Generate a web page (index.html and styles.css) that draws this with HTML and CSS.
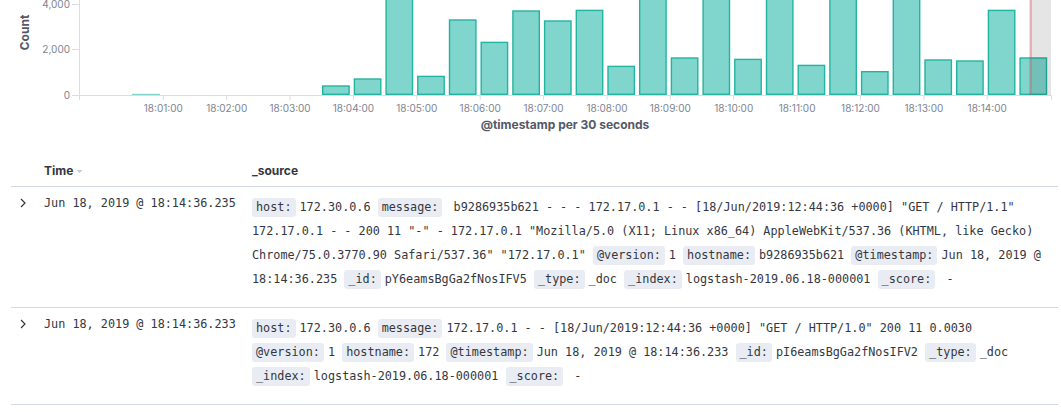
FILE: index.html
```html
<!DOCTYPE html>
<html>
<head>
<meta charset="utf-8">
<link rel="stylesheet" href="styles.css">
</head>
<body>
<div class="chart">
  <svg class="histogram" width="1061" height="154" viewBox="0 0 1061 154">
    <g class="bars">
      <rect class="bar-flat" x="132" y="93.8" width="28" height="1.2"/>
      <rect class="bar" x="322.7" y="86" width="26.4" height="8.3"/>
      <rect class="bar" x="354.4" y="79" width="26.4" height="15.3"/>
      <rect class="bar" x="386.1" y="-5" width="26.4" height="99.3"/>
      <rect class="bar" x="417.8" y="76.4" width="26.4" height="17.9"/>
      <rect class="bar" x="449.5" y="20" width="26.4" height="74.3"/>
      <rect class="bar" x="481.2" y="42.4" width="26.4" height="51.9"/>
      <rect class="bar" x="512.9" y="11" width="26.4" height="83.3"/>
      <rect class="bar" x="544.6" y="21" width="26.4" height="73.3"/>
      <rect class="bar" x="576.3" y="10.4" width="26.4" height="83.9"/>
      <rect class="bar" x="608" y="66.4" width="26.4" height="27.9"/>
      <rect class="bar" x="639.7" y="-5" width="26.4" height="99.3"/>
      <rect class="bar" x="671.4" y="58" width="26.4" height="36.3"/>
      <rect class="bar" x="703.1" y="-5" width="26.4" height="99.3"/>
      <rect class="bar" x="734.8" y="59.4" width="26.4" height="34.9"/>
      <rect class="bar" x="766.5" y="-5" width="26.4" height="99.3"/>
      <rect class="bar" x="798.2" y="65.4" width="26.4" height="28.9"/>
      <rect class="bar" x="829.9" y="-5" width="26.4" height="99.3"/>
      <rect class="bar" x="861.6" y="71.7" width="26.4" height="22.6"/>
      <rect class="bar" x="893.3" y="-5" width="26.4" height="99.3"/>
      <rect class="bar" x="925" y="60" width="26.4" height="34.3"/>
      <rect class="bar" x="956.7" y="61" width="26.4" height="33.3"/>
      <rect class="bar" x="988.4" y="10.4" width="26.4" height="83.9"/>
      <rect class="bar" x="1020.1" y="58" width="26.4" height="36.3"/>
    </g>
    <rect class="partial" x="1029" y="0" width="22" height="95"/>
    <rect class="now-line" x="1030" y="0" width="2" height="95"/>
    <g class="axis">
      <line x1="79.5" y1="0" x2="79.5" y2="100"/>
      <line x1="72" y1="4.5" x2="79" y2="4.5"/>
      <line x1="72" y1="49.5" x2="79" y2="49.5"/>
      <line x1="72" y1="95.5" x2="79" y2="95.5"/>
      <line x1="79" y1="95.5" x2="1052" y2="95.5"/>
      <line x1="1051.5" y1="95" x2="1051.5" y2="100"/>
      <line x1="163.3" y1="95" x2="163.3" y2="100"/>
      <line x1="226.7" y1="95" x2="226.7" y2="100"/>
      <line x1="290.1" y1="95" x2="290.1" y2="100"/>
      <line x1="353.4" y1="95" x2="353.4" y2="100"/>
      <line x1="416.8" y1="95" x2="416.8" y2="100"/>
      <line x1="480.2" y1="95" x2="480.2" y2="100"/>
      <line x1="543.6" y1="95" x2="543.6" y2="100"/>
      <line x1="607" y1="95" x2="607" y2="100"/>
      <line x1="670.3" y1="95" x2="670.3" y2="100"/>
      <line x1="733.7" y1="95" x2="733.7" y2="100"/>
      <line x1="797.1" y1="95" x2="797.1" y2="100"/>
      <line x1="860.5" y1="95" x2="860.5" y2="100"/>
      <line x1="923.9" y1="95" x2="923.9" y2="100"/>
      <line x1="987.2" y1="95" x2="987.2" y2="100"/>
    </g>
    <g class="y-labels">
      <text x="70" y="7.5">4,000</text>
      <text x="70" y="53">2,000</text>
      <text x="70" y="98.8">0</text>
    </g>
    <g class="x-labels">
      <text x="163.3" y="112">18:01:00</text>
      <text x="226.7" y="112">18:02:00</text>
      <text x="290.1" y="112">18:03:00</text>
      <text x="353.4" y="112">18:04:00</text>
      <text x="416.8" y="112">18:05:00</text>
      <text x="480.2" y="112">18:06:00</text>
      <text x="543.6" y="112">18:07:00</text>
      <text x="607" y="112">18:08:00</text>
      <text x="670.3" y="112">18:09:00</text>
      <text x="733.7" y="112">18:10:00</text>
      <text x="797.1" y="112">18:11:00</text>
      <text x="860.5" y="112">18:12:00</text>
      <text x="923.9" y="112">18:13:00</text>
      <text x="987.2" y="112">18:14:00</text>
    </g>
    <text class="axis-title" transform="translate(29 32.5) rotate(-90)">Count</text>
    <text class="axis-title" x="565" y="129">@timestamp per 30 seconds</text>
  </svg>
</div>

<div class="doc-table">
  <div class="doc-row doc-head">
    <div class="cell-toggle"></div>
    <div class="cell-time">Time <svg class="sort-icon" width="7" height="5" viewBox="0 0 7 5"><path d="M0.5 1 L6.5 1 L3.5 4 Z"/></svg></div>
    <div class="cell-source">_source</div>
  </div>

  <div class="doc-row entry">
    <div class="cell-toggle"><svg class="chevron" width="16" height="16" viewBox="0 0 16 16"><path d="M7 4 L11 8 L7 12"/></svg></div>
    <div class="cell-time">Jun 18, 2019 @ 18:14:36.235</div>
    <div class="cell-source"><dl class="fields"><dt>host:</dt><dd>172.30.0.6</dd> <dt>message:</dt><dd> b9286935b621 - - - 172.17.0.1 - - [18/Jun/2019:12:44:36 +0000] "GET / HTTP/1.1" 172.17.0.1 - - 200 11 "-" - 172.17.0.1 "Mozilla/5.0 (X11; Linux x86_64) AppleWebKit/537.36 (KHTML, like Gecko) Chrome/75.0.3770.90 Safari/537.36" "172.17.0.1"</dd> <dt>@version:</dt><dd>1</dd> <dt>hostname:</dt><dd>b9286935b621</dd> <dt>@timestamp:</dt><dd>Jun 18, 2019 @ 18:14:36.235</dd> <dt>_id:</dt><dd>pY6eamsBgGa2fNosIFV5</dd> <dt>_type:</dt><dd>_doc</dd> <dt>_index:</dt><dd>logstash-2019.06.18-000001</dd> <dt>_score:</dt><dd> -</dd></dl></div>
  </div>

  <div class="doc-row entry">
    <div class="cell-toggle"><svg class="chevron" width="16" height="16" viewBox="0 0 16 16"><path d="M7 4 L11 8 L7 12"/></svg></div>
    <div class="cell-time">Jun 18, 2019 @ 18:14:36.233</div>
    <div class="cell-source"><dl class="fields"><dt>host:</dt><dd>172.30.0.6</dd> <dt>message:</dt><dd>172.17.0.1 - - [18/Jun/2019:12:44:36 +0000] "GET / HTTP/1.0" 200 11 0.0030</dd> <dt>@version:</dt><dd>1</dd> <dt>hostname:</dt><dd>172</dd> <dt>@timestamp:</dt><dd>Jun 18, 2019 @ 18:14:36.233</dd> <dt>_id:</dt><dd>pI6eamsBgGa2fNosIFV2</dd> <dt>_type:</dt><dd>_doc</dd> <dt>_index:</dt><dd>logstash-2019.06.18-000001</dd> <dt>_score:</dt><dd> -</dd></dl></div>
  </div>
</div>
</body>
</html>
```

FILE: styles.css
```css
body {
  margin: 0;
  background: #ffffff;
  color: #343741;
  font-family: Inter, "Noto Sans", sans-serif;
}

.chart {
  height: 154px;
}

.histogram {
  display: block;
}

.bar {
  fill: #80d6cd;
  stroke: #22b4a1;
  stroke-width: 1.4;
}

.bar-flat {
  fill: #80d6cd;
}

.partial {
  fill: rgba(0, 0, 0, 0.1);
}

.now-line {
  fill: rgba(228, 80, 90, 0.35);
}

.axis line {
  stroke: #dadde2;
  stroke-width: 1;
}

.y-labels text {
  font-family: Inter, sans-serif;
  font-size: 10px;
  fill: #7d8491;
  text-anchor: end;
}

.x-labels text {
  font-family: Inter, sans-serif;
  font-size: 10px;
  fill: #7d8491;
  text-anchor: middle;
}

.axis-title {
  font-family: Inter, sans-serif;
  font-size: 12px;
  font-weight: 700;
  fill: #535966;
  text-anchor: middle;
}

.doc-table {
  margin-left: 11px;
  width: 1047px;
}

.doc-row {
  display: grid;
  grid-template-columns: 25px 208px 1fr;
  border-bottom: 1px solid #d3dae6;
}

.doc-head {
  height: 32px;
  align-items: center;
  font-size: 12px;
  font-weight: 700;
  color: #343741;
}

.cell-time,
.cell-source {
  padding: 0 8px;
}

.sort-icon {
  fill: #c5cad3;
  vertical-align: middle;
}

.entry .cell-toggle {
  padding: 8px 0 0 3px;
}

.chevron {
  display: block;
  fill: none;
  stroke: #343741;
  stroke-width: 1.2;
}

.entry .cell-time {
  padding-top: 8px;
  font-family: "DejaVu Sans Mono", "Liberation Mono", monospace;
  font-size: 11.8px;
  line-height: 16px;
  white-space: nowrap;
}

.entry .cell-source {
  padding: 8px 8px 16px;
  font-family: "DejaVu Sans Mono", "Liberation Mono", monospace;
  font-size: 11.8px;
  line-height: 24px;
}

.fields {
  margin: 0;
}

.fields dt,
.fields dd {
  display: inline;
  margin: 0;
}

.fields dt {
  display: inline-block;
  line-height: 19px;
  background: #e9edf3;
  padding: 0 4px;
  border-radius: 3px;
  margin-right: 4px;
}
```
